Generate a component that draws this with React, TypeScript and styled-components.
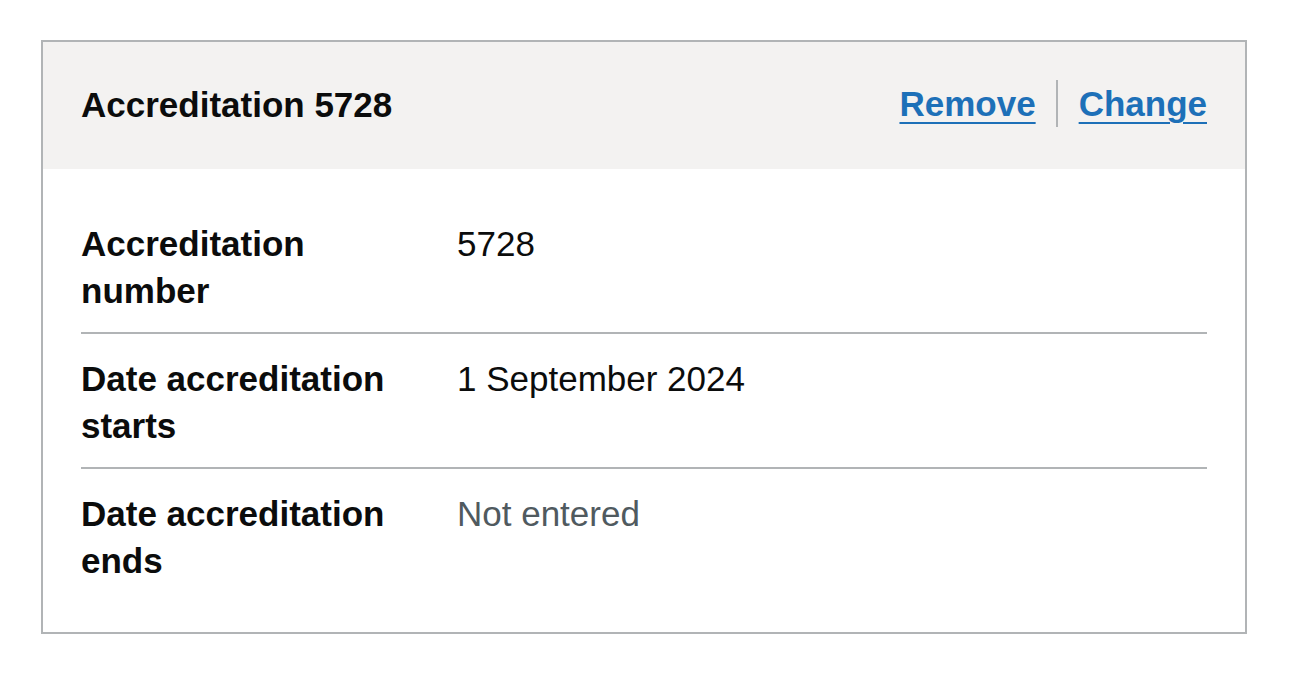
import React from "react";
import styled, { createGlobalStyle } from "styled-components";

const GlobalStyle = createGlobalStyle`
  html, body {
    margin: 0;
    padding: 0;
    background: #ffffff;
  }
  body {
    font-family: "Liberation Sans", Arial, sans-serif;
    color: #0b0c0c;
    -webkit-font-smoothing: antialiased;
  }
`;

const Page = styled.div`
  padding: 40px 43px 40px 41px;
`;

const Card = styled.section`
  width: 1206px;
  box-sizing: border-box;
  border: 2px solid #b1b4b6;
`;

const CardHeader = styled.div`
  display: flex;
  align-items: flex-start;
  justify-content: space-between;
  background: #f3f2f1;
  padding: 28px 38px;
`;

const CardTitle = styled.h2`
  margin: 11px 38px 13px 0;
  font-size: 35px;
  line-height: 47px;
  font-weight: 700;
  color: #0b0c0c;
`;

const Actions = styled.ul`
  display: flex;
  margin: 10px 0 14px;
  padding: 0;
  list-style: none;
`;

const ActionItem = styled.li<{ $first?: boolean }>`
  font-size: 35px;
  line-height: 47px;
  font-weight: 700;
  padding: ${(p) => (p.$first ? "0 20px 0 0" : "0 0 0 21px")};
  border-right: ${(p) => (p.$first ? "2px solid #b1b4b6" : "none")};
`;

const ActionLink = styled.a`
  color: #1d70b8;
  text-decoration: underline;
  text-decoration-thickness: 2px;
  text-underline-offset: 0.16em;
`;

const CardContent = styled.div`
  padding: 30px 38px 30px;
`;

const SummaryList = styled.dl`
  margin: 0;
`;

const Row = styled.div<{ $last?: boolean }>`
  display: grid;
  grid-template-columns: 338px 1fr;
  column-gap: 38px;
  border-bottom: ${(p) => (p.$last ? "none" : "2px solid #b1b4b6")};
`;

const Key = styled.dt`
  margin: 0;
  padding: 21px 0 18px;
  font-size: 35px;
  line-height: 47px;
  font-weight: 700;
  color: #0b0c0c;
`;

const Value = styled.dd<{ $muted?: boolean }>`
  margin: 0;
  padding: 21px 0 18px;
  font-size: 35px;
  line-height: 47px;
  font-weight: 400;
  color: ${(p) => (p.$muted ? "#505a5f" : "#0b0c0c")};
`;

const rows = [
  { key: "Accreditation number", value: "5728" },
  { key: "Date accreditation starts", value: "1 September 2024" },
  { key: "Date accreditation ends", value: "Not entered", muted: true },
];

export default function App() {
  return (
    <>
      <GlobalStyle />
      <Page>
        <Card>
          <CardHeader>
            <CardTitle>Accreditation 5728</CardTitle>
            <Actions>
              <ActionItem $first>
                <ActionLink href="#">Remove</ActionLink>
              </ActionItem>
              <ActionItem>
                <ActionLink href="#">Change</ActionLink>
              </ActionItem>
            </Actions>
          </CardHeader>
          <CardContent>
            <SummaryList>
              {rows.map((r, i) => (
                <Row key={r.key} $last={i === rows.length - 1}>
                  <Key>{r.key}</Key>
                  <Value $muted={r.muted}>{r.value}</Value>
                </Row>
              ))}
            </SummaryList>
          </CardContent>
        </Card>
      </Page>
    </>
  );
}
